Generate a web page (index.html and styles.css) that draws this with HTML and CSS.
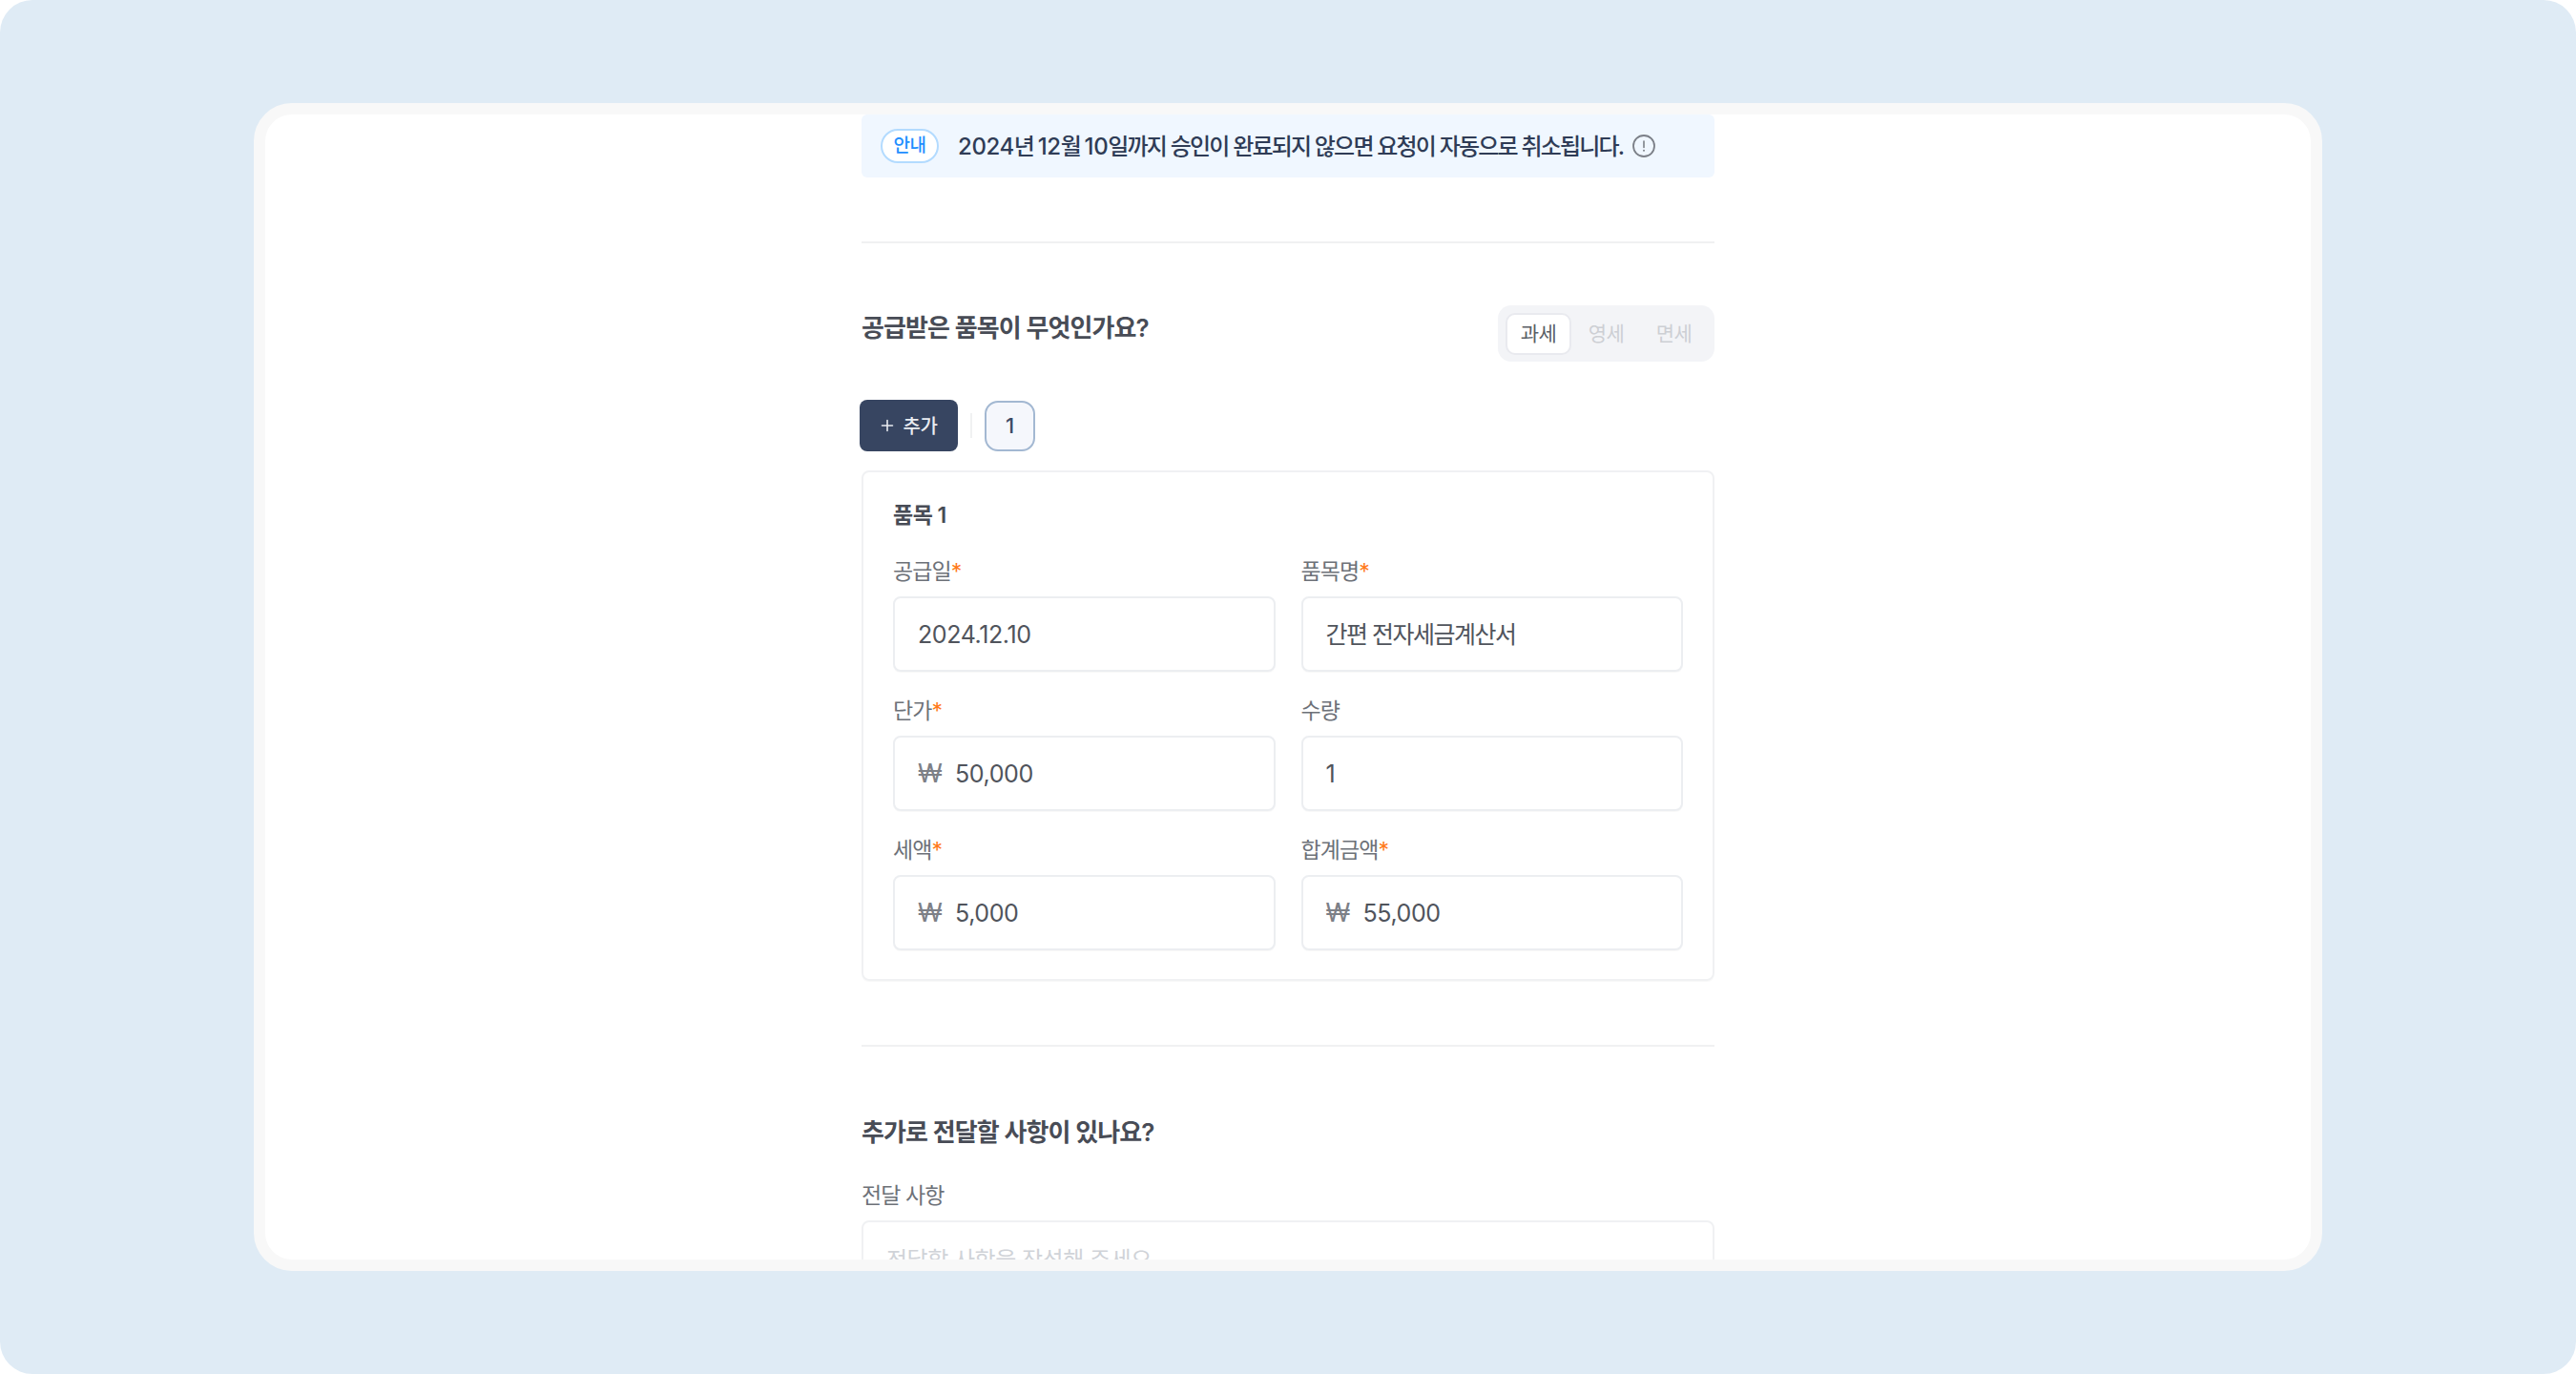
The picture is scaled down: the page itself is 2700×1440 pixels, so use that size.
FILE: index.html
```html
<!DOCTYPE html>
<html lang="ko">

<head>
    <meta charset="UTF-8">
    <title>품목 입력</title>
    <link rel="stylesheet" href="styles.css">
</head>

<body>
    <div class="backdrop">
        <div class="frame">
            <div class="content">
                <div class="notice">
                    <span class="badge">안내</span>
                    <span class="notice-text"><span class="num">2024</span>년 <span class="num">12</span>월 <span class="num">10</span>일까지 승인이 완료되지 않으면 요청이 자동으로 취소됩니다.</span>
                    <svg class="notice-icon" viewBox="0 0 24 24" fill="none">
                        <circle cx="12" cy="12" r="11" stroke="#7c8088" stroke-width="1.8" />
                        <path d="M12 7v6.5" stroke="#7c8088" stroke-width="1.6" stroke-linecap="round" />
                        <circle cx="12" cy="16.8" r="1" fill="#7c8088" />
                    </svg>
                </div>

                <hr class="divider">

                <div class="section-head">
                    <h2 class="title">공급받은 품목이 무엇인가요?</h2>
                    <div class="segment">
                        <span class="seg-item on">과세</span>
                        <span class="seg-item">영세</span>
                        <span class="seg-item">면세</span>
                    </div>
                </div>

                <div class="tabs">
                    <button class="add-btn">
                        <svg class="plus" viewBox="0 0 14 14" fill="none">
                            <path d="M7 1.5v11M1.5 7h11" stroke="#e9ecf1" stroke-width="1.6" stroke-linecap="round" />
                        </svg>
                        <span class="add-text">추가</span>
                    </button>
                    <span class="tab-sep"></span>
                    <span class="tab on">1</span>
                </div>

                <div class="card">
                    <div class="card-title">품목 1</div>
                    <div class="grid">
                        <div class="field">
                            <label class="label">공급일<em>*</em></label>
                            <div class="input">2024.12.10</div>
                        </div>
                        <div class="field">
                            <label class="label">품목명<em>*</em></label>
                            <div class="input ko">간편 전자세금계산서</div>
                        </div>
                        <div class="field">
                            <label class="label">단가<em>*</em></label>
                            <div class="input"><span class="won">₩</span>50,000</div>
                        </div>
                        <div class="field">
                            <label class="label">수량</label>
                            <div class="input">1</div>
                        </div>
                        <div class="field">
                            <label class="label">세액<em>*</em></label>
                            <div class="input"><span class="won">₩</span>5,000</div>
                        </div>
                        <div class="field">
                            <label class="label">합계금액<em>*</em></label>
                            <div class="input"><span class="won">₩</span>55,000</div>
                        </div>
                    </div>
                </div>

                <hr class="divider">

                <h2 class="title extra">추가로 전달할 사항이 있나요?</h2>
                <label class="label">전달 사항</label>
                <div class="textarea">전달할 사항을 작성해 주세요</div>
            </div>
        </div>
    </div>
</body>

</html>
```

FILE: styles.css
```css
* {
    margin: 0;
    padding: 0;
    box-sizing: border-box;
}

html,
body {
    width: 2700px;
    height: 1440px;
    overflow: hidden;
    background: #fff;
    font-family: Inter, "Noto Sans CJK KR", sans-serif;
}

.backdrop {
    width: 2700px;
    height: 1440px;
    padding: 108px 266px;
    background: #dfebf5;
    border-radius: 34px;
}

.frame {
    height: 1224px;
    border: 12px solid #f8f8f8;
    border-radius: 40px;
    background: #fff;
    overflow: hidden;
}

.content {
    width: 894px;
    margin: 0 auto;
}

.notice {
    display: flex;
    align-items: center;
    height: 66px;
    padding-left: 20px;
    background: #f0f7ff;
    border-radius: 6px;
}

.badge {
    width: 61px;
    height: 36px;
    line-height: 32px;
    text-align: center;
    font-size: 19px;
    font-weight: 500;
    letter-spacing: -0.5px;
    color: #1f8fff;
    background: #fff;
    border: 2px solid #b3dbff;
    border-radius: 18px;
}

.notice-text {
    margin-left: 20px;
    padding-bottom: 3px;
    font-size: 24px;
    font-weight: 500;
    letter-spacing: -1.8px;
    color: #2f3c56;
    white-space: nowrap;
}

.notice-text .num {
    letter-spacing: -0.4px;
}

.notice-icon {
    width: 24px;
    height: 24px;
    margin-left: 10px;
}

.divider {
    height: 2px;
    margin-top: 67px;
    border: 0;
    background: #f0f1f2;
}

.section-head {
    display: flex;
    justify-content: space-between;
    align-items: flex-start;
    margin-top: 65px;
}

.title {
    padding-top: 6px;
    font-size: 26px;
    line-height: 36px;
    font-weight: 600;
    letter-spacing: -0.9px;
    color: #484c56;
}

.title.extra {
    height: 36px;
    margin-top: 70px;
    margin-bottom: 33px;
    padding-top: 2px;
}

.segment {
    display: flex;
    height: 59px;
    padding: 8px;
    background: #f3f4f7;
    border-radius: 14px;
}

.seg-item {
    width: 69px;
    height: 44px;
    margin-right: 2px;
    line-height: 44px;
    text-align: center;
    font-size: 21px;
    letter-spacing: -0.5px;
    color: #cdcfd4;
}

.seg-item:last-child {
    margin-right: 0;
}

.seg-item.on {
    color: #5a5e66;
    background: #fff;
    border: 2px solid #e9eaef;
    border-radius: 10px;
    line-height: 40px;
}

.tabs {
    display: flex;
    align-items: center;
    height: 54px;
    margin-top: 40px;
    margin-left: -2px;
}

.add-btn {
    display: flex;
    align-items: center;
    justify-content: center;
    gap: 10px;
    width: 103px;
    height: 54px;
    border: 0;
    border-radius: 8px;
    background: #374561;
    color: #e9ecf1;
    font-family: inherit;
    font-size: 20px;
    font-weight: 500;
    letter-spacing: -0.5px;
}

.add-text {
    padding-bottom: 2px;
}

.plus {
    width: 14px;
    height: 14px;
}

.tab-sep {
    width: 2px;
    height: 26px;
    margin: 0 13px;
    background: #f0f1f2;
}

.tab {
    width: 53px;
    height: 53px;
    line-height: 49px;
    text-align: center;
    font-size: 22px;
    font-weight: 500;
    color: #3c4a66;
    background: #f5f7fc;
    border: 2px solid #a3b8d2;
    border-radius: 14px;
}

.card {
    height: 535px;
    margin-top: 20px;
    padding: 29px 31px 30px;
    border: 2px solid #f0f1f3;
    border-radius: 8px;
    box-shadow: 0 1px 1px rgba(0, 0, 0, .03);
}

.card-title {
    margin-bottom: 26px;
    font-size: 23px;
    line-height: 32px;
    font-weight: 600;
    letter-spacing: -0.5px;
    color: #484c56;
}

.grid {
    display: grid;
    grid-template-columns: 1fr 1fr;
    column-gap: 27px;
    row-gap: 24px;
}

.label {
    display: block;
    height: 32px;
    margin-bottom: 11px;
    padding-top: 1px;
    font-size: 23px;
    line-height: 32px;
    letter-spacing: -0.9px;
    color: #6d7178;
}

.label em {
    font-style: normal;
    color: #ff7a1a;
}

.input {
    display: flex;
    align-items: center;
    height: 79px;
    padding-left: 24px;
    font-size: 25px;
    letter-spacing: -0.4px;
    color: #50545c;
    background: #fff;
    border: 2px solid #eceef1;
    border-radius: 8px;
    box-shadow: 0 1px 1px rgba(0, 0, 0, .03);
}

.input.ko {
    padding-bottom: 3px;
    letter-spacing: -1.5px;
}

.won {
    width: 39px;
    font-size: 27px;
    color: #7d8087;
}

.textarea {
    height: 160px;
    padding: 24px;
    font-size: 24px;
    line-height: 32px;
    letter-spacing: -0.5px;
    color: #d0d3d8;
    border: 2px solid #f0f1f3;
    border-radius: 8px;
}
```
